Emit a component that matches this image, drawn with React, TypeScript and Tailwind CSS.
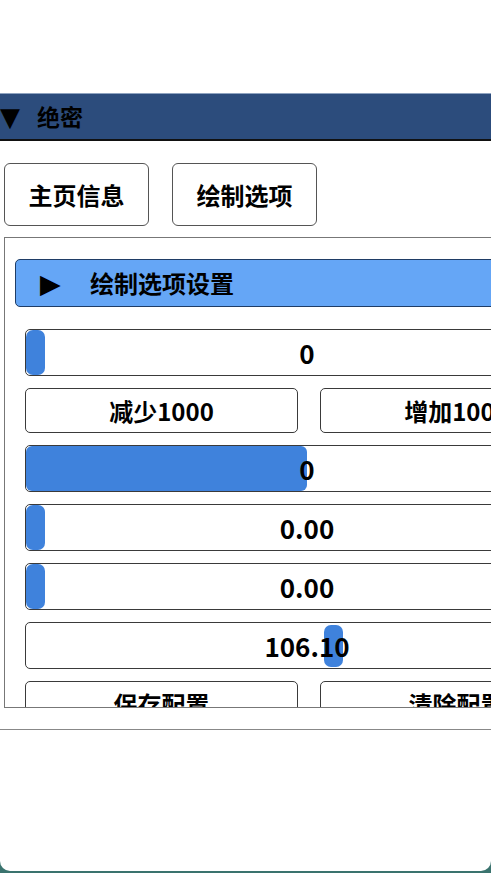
import React from "react";

const font = { fontFamily: '"Noto Sans CJK SC", "Noto Sans", sans-serif' };

function Slider({ value, grab, fill, grabTop = false }: { value: string; grab?: number; fill?: number; grabTop?: boolean }) {
  return (
    <div className="relative h-[47px] w-[564px] shrink-0 rounded-[5px] border border-[#3a3a3a] bg-white">
      {fill !== undefined && (
        <div className="absolute left-0 top-0 bottom-0 rounded-[6px] bg-[#3f82dc]" style={{ width: fill }} />
      )}
      {grab !== undefined && (
        <div
          className={
            grabTop
              ? "absolute top-[2px] bottom-[1px] w-[19px] rounded-[7px] bg-[#3f82dc]"
              : "absolute top-0 bottom-0 w-[19px] rounded-[7px] bg-[#3f82dc]"
          }
          style={{ left: grab }}
        />
      )}
      <div className="relative flex h-full items-center justify-center text-[26px] font-semibold leading-none text-black">
        {value}
      </div>
    </div>
  );
}

function RowButtons({ a, b }: { a: string; b: string }) {
  return (
    <div className="flex w-[568px] shrink-0 gap-[22px]">
      <div className="flex h-[45px] w-[273px] items-center justify-center rounded-[5px] border border-[#3a3a3a] text-[24px] font-bold text-black">
        {a}
      </div>
      <div className="flex h-[45px] w-[273px] items-center justify-center rounded-[5px] border border-[#3a3a3a] text-[24px] font-bold text-black">
        {b}
      </div>
    </div>
  );
}

export default function App() {
  return (
    <div className="h-[873px] w-[491px] overflow-hidden bg-[#3a736e]" style={font}>
      <div className="flex h-[871px] flex-col overflow-hidden rounded-b-[10px] bg-white">
        <div className="h-[93px] shrink-0" />
        <div className="flex h-[48px] shrink-0 items-center border-t border-[#8fa3c0] border-b-2 border-b-[#111] bg-[#2c4c7c]">
          <span className="w-[37px] text-[26px] leading-none text-black" style={{ fontFamily: '"DejaVu Sans", sans-serif' }}>▼</span>
          <span className="text-[23px] font-bold leading-none text-black">绝密</span>
        </div>
        <div className="flex shrink-0 gap-[23px] pl-[4px] pt-[22px]">
          <div className="flex h-[63px] w-[145px] items-center justify-center rounded-[6px] border border-[#555] text-[24px] font-bold text-black">
            主页信息
          </div>
          <div className="flex h-[63px] w-[145px] items-center justify-center rounded-[6px] border border-[#555] text-[24px] font-bold text-black">
            绘制选项
          </div>
        </div>
        <div className="ml-[4px] mt-[11px] h-[471px] shrink-0 overflow-hidden border border-r-0 border-[#777]">
          <div className="flex w-[620px] flex-col pl-[10px] pt-[21px]">
            <div className="flex h-[48px] w-[600px] items-center rounded-[5px] border border-[#1f3d66] bg-[#65a6f6]">
              <span className="ml-[24px] w-[50px] text-[27px] leading-none text-black" style={{ fontFamily: '"DejaVu Sans", sans-serif' }}>▶</span>
              <span className="text-[24px] font-bold leading-none text-black">绘制选项设置</span>
            </div>
            <div className="mt-[22px] flex flex-col gap-[12px] pl-[10px]">
              <Slider value="0" grab={0} />
              <RowButtons a="减少1000" b="增加1000" />
              <Slider value="0" fill={281} />
              <Slider value="0.00" grab={0} />
              <Slider value="0.00" grab={0} />
              <Slider value="106.10" grab={298} grabTop />
              <RowButtons a="保存配置" b="清除配置" />
            </div>
          </div>
        </div>
        <div className="mt-[21px] h-px shrink-0 bg-[#888]" />
      </div>
    </div>
  );
}
